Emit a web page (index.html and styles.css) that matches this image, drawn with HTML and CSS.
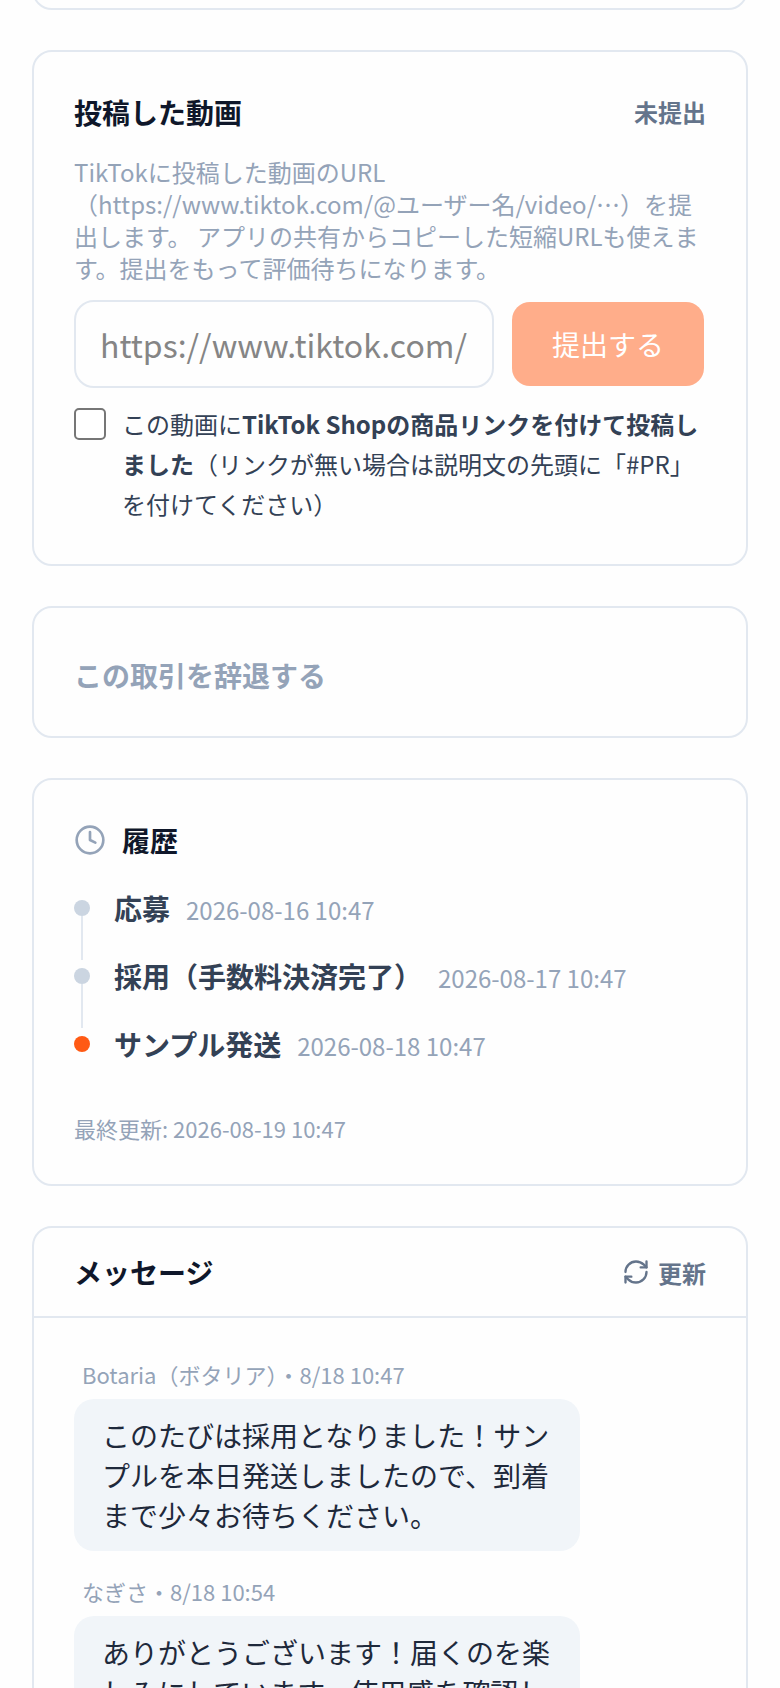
FILE: index.html
```html
<!DOCTYPE html>
<html lang="ja">
<head>
<meta charset="utf-8">
<meta name="viewport" content="width=device-width, initial-scale=1">
<title>取引の詳細</title>
<link rel="stylesheet" href="styles.css">
</head>
<body>
<main class="page">
  <section class="card card-tail"></section>

  <section class="card">
    <header class="card-head">
      <h2 class="title">投稿した動画</h2>
      <span class="status">未提出</span>
    </header>
    <p class="help" id="url-help">TikTokに投稿した動画のURL（https://www.tiktok.com/@ユーザー名/video/…）を提出します。 アプリの共有からコピーした短縮URLも使えます。提出をもって評価待ちになります。</p>
    <form class="submit-form">
      <div class="submit-row">
        <input class="url-input" type="url" placeholder="https://www.tiktok.com/" aria-label="動画のURL" aria-describedby="url-help">
        <button class="submit-button" type="submit" disabled>提出する</button>
      </div>
      <div class="consent">
        <input class="consent-box" type="checkbox" id="consent">
        <label class="consent-text" for="consent">この動画に<strong>TikTok Shopの商品リンクを付けて投稿しました</strong>（リンクが無い場合は説明文の先頭に「#PR」を付けてください）</label>
      </div>
    </form>
  </section>

  <section class="card">
    <button class="decline" type="button">この取引を辞退する</button>
  </section>

  <section class="card">
    <header class="history-head">
      <svg class="clock" viewBox="0 0 24 24" aria-hidden="true"><circle cx="12" cy="12" r="10"/><path d="M12 6v6l4 2"/></svg>
      <h2 class="title">履歴</h2>
    </header>
    <ol class="timeline">
      <li class="event">
        <span class="rail"><span class="dot"></span><span class="line"></span></span>
        <span class="event-body"><span class="event-name">応募</span><time class="event-time">2026-08-16 10:47</time></span>
      </li>
      <li class="event">
        <span class="rail"><span class="dot"></span><span class="line"></span></span>
        <span class="event-body"><span class="event-name">採用（手数料決済完了）</span><time class="event-time">2026-08-17 10:47</time></span>
      </li>
      <li class="event">
        <span class="rail"><span class="dot dot-current"></span></span>
        <span class="event-body"><span class="event-name">サンプル発送</span><time class="event-time">2026-08-18 10:47</time></span>
      </li>
    </ol>
    <p class="updated">最終更新: 2026-08-19 10:47</p>
  </section>

  <section class="card card-messages">
    <header class="messages-head">
      <h2 class="title">メッセージ</h2>
      <button class="refresh" type="button">
        <svg class="refresh-icon" viewBox="0 0 24 24" aria-hidden="true"><path d="M3 12a9 9 0 0 1 9-9 9.75 9.75 0 0 1 6.74 2.74L21 8"/><path d="M21 3v5h-5"/><path d="M21 12a9 9 0 0 1-9 9 9.75 9.75 0 0 1-6.74-2.74L3 16"/><path d="M8 16H3v5"/></svg>
        更新
      </button>
    </header>
    <div class="messages">
      <article class="message">
        <p class="meta">Botaria（ボタリア）・8/18 10:47</p>
        <p class="bubble">このたびは採用となりました！サンプルを本日発送しましたので、到着まで少々お待ちください。</p>
      </article>
      <article class="message">
        <p class="meta">なぎさ・8/18 10:54</p>
        <p class="bubble">ありがとうございます！届くのを楽しみにしています。使用感を確認し</p>
      </article>
    </div>
  </section>
</main>
</body>
</html>
```

FILE: styles.css
```css
* {
  box-sizing: border-box;
}

body {
  margin: 0;
  background: #fefefe;
  color: #0f172a;
  font-family: "Noto Sans CJK JP", "Noto Sans", sans-serif;
  font-size: 28px;
  line-height: 40px;
}

h2, p, ol {
  margin: 0;
  padding: 0;
}

button, input {
  margin: 0;
  font-family: inherit;
}

.page {
  display: flex;
  flex-direction: column;
  gap: 40px;
  height: 100vh;
  padding: 0 32px;
  overflow: hidden;
}

.card {
  flex: none;
  padding: 40px;
  border: 2px solid #e2e8f0;
  border-radius: 20px;
  background: #fefefe;
}

/* lower edge of the card scrolled above the window */
.card-tail {
  height: 40px;
  margin-top: -30px;
  padding: 0;
}

.card-head,
.messages-head {
  display: flex;
  align-items: center;
  justify-content: space-between;
}

.title {
  font-size: 28px;
  font-weight: 700;
  line-height: 40px;
}

.status {
  color: #64748b;
  font-size: 24px;
  font-weight: 700;
}

.help {
  margin-top: 24px;
  color: #94a3b8;
  font-size: 24px;
  line-height: 32px;
}

.submit-form {
  display: flex;
  flex-direction: column;
  gap: 16px;
  margin-top: 16px;
}

.submit-row {
  display: flex;
  gap: 16px;
}

.url-input {
  flex: 1;
  min-width: 0;
  height: 88px;
  padding: 0 24px;
  border: 2px solid #e2e8f0;
  border-radius: 20px;
  background: #fefefe;
  color: #0f172a;
  font-size: 32px;
}

.url-input::placeholder {
  color: #858585;
}

.submit-button {
  padding: 0 40px;
  border: 2px solid transparent;
  border-radius: 20px;
  background: #ffad8a;
  background-clip: padding-box;
  color: #fff;
  font-size: 28px;
}

.consent {
  display: flex;
  align-items: flex-start;
  gap: 16px;
}

.consent-box {
  flex: none;
  width: 32px;
  height: 32px;
  margin-top: 4px;
  appearance: none;
  border: 2px solid #767676;
  border-radius: 5px;
  background: #fff;
}

.consent-box:checked {
  background: #ff5a14;
}

.consent-text {
  color: #334155;
  font-size: 24px;
}

.decline {
  display: block;
  height: 48px;
  padding: 6px 0 0;
  border: 0;
  background: none;
  color: #94a3b8;
  font-size: 28px;
  font-weight: 700;
}

.history-head {
  display: flex;
  align-items: center;
  gap: 16px;
}

.clock,
.refresh-icon {
  fill: none;
  stroke: currentColor;
  stroke-width: 2;
  stroke-linecap: round;
  stroke-linejoin: round;
}

.clock {
  width: 32px;
  height: 32px;
  color: #94a3b8;
}

.timeline {
  margin-top: 32px;
  list-style: none;
}

.event {
  display: flex;
  gap: 24px;
}

.rail {
  display: flex;
  flex-direction: column;
  align-items: center;
  padding-top: 8px;
}

.dot {
  width: 16px;
  height: 16px;
  border-radius: 50%;
  background: #cbd5e1;
}

.dot-current {
  background: #ff5a14;
}

.line {
  flex: 1;
  width: 2px;
  background: #e2e8f0;
}

.event-body {
  display: flex;
  flex-wrap: wrap;
  align-items: baseline;
  column-gap: 16px;
  padding-bottom: 34px;
  line-height: 32px;
}

.event-name {
  color: #334155;
  font-weight: 700;
}

.event-time {
  color: #94a3b8;
  font-size: 24px;
}

.updated {
  margin-top: 16px;
  color: #94a3b8;
  font-size: 22px;
  line-height: 32px;
}

.card-messages {
  padding: 0;
}

.messages-head {
  padding: 24px 40px;
  border-bottom: 2px solid #e2e8f0;
}

.refresh {
  display: flex;
  align-items: center;
  gap: 8px;
  padding: 0;
  border: 0;
  background: none;
  color: #64748b;
  font-size: 24px;
  font-weight: 700;
}

.refresh-icon {
  width: 28px;
  height: 28px;
}

.messages {
  display: flex;
  flex-direction: column;
  gap: 24px;
  padding: 40px;
}

.message {
  display: flex;
  flex-direction: column;
  align-items: flex-start;
  gap: 8px;
}

.meta {
  padding: 0 8px;
  color: #94a3b8;
  font-size: 22px;
  line-height: 33px;
}

.bubble {
  max-width: 80%;
  padding: 16px 28px;
  border-radius: 20px;
  background: #f1f5f9;
  color: #1e293b;
}
```
